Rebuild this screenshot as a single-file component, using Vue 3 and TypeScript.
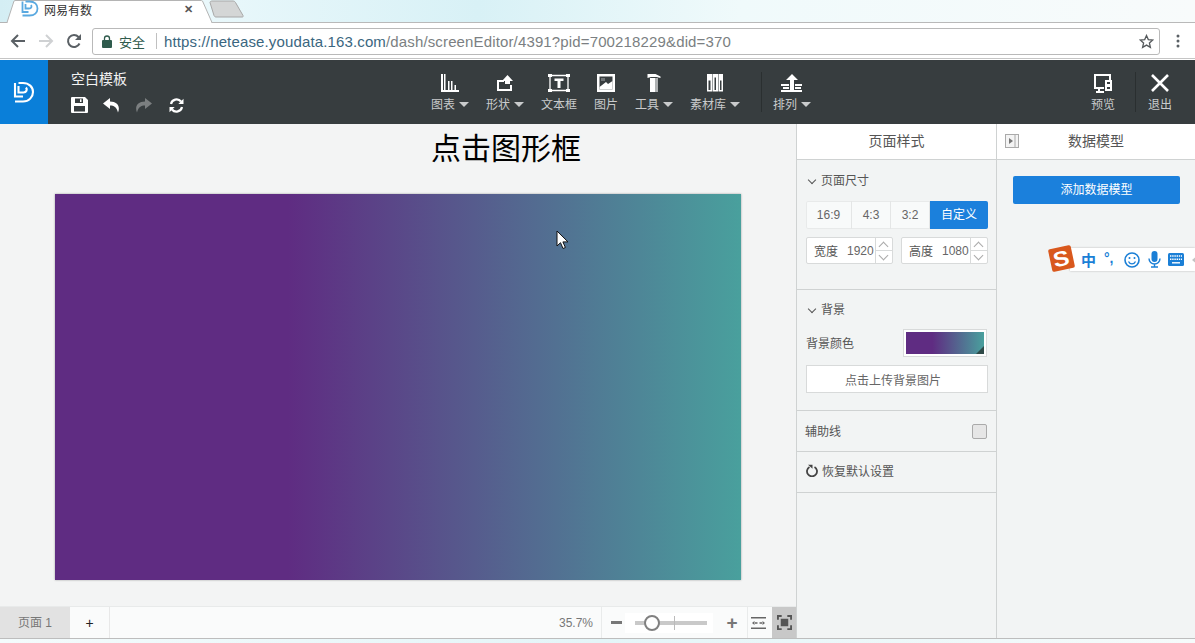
<script setup lang="ts">
interface Tool { label: string; caret: boolean; icon: string }
const tools: Tool[] = [
  { label: '图表', caret: true, icon: 'chart' },
  { label: '形状', caret: true, icon: 'shape' },
  { label: '文本框', caret: false, icon: 'text' },
  { label: '图片', caret: false, icon: 'image' },
  { label: '工具', caret: true, icon: 'tool' },
  { label: '素材库', caret: true, icon: 'lib' },
]
const ratios = ['16:9', '4:3', '3:2']
</script>

<template>
  <div class="page">
    <div class="tabstrip">
      <svg class="tabshape" width="245" height="23" viewBox="0 0 245 23">
        <path d="M0 22.500H7L14 1C14.500 .5 15 .5 16 .5H200C201 .5 202 .5 202.500 1L212 22.500" fill="#fff" stroke="#b4b4b4" />
        <path d="M8 21h203v2H8z" fill="#fff" />
        <path d="M210 2.500C210 1.500 211 1 212 1H233C234 1 235 1.500 235.500 2.500L243 15.500C243.500 16.500 243 17 242 17H216C215 17 214.500 16.500 214 15.500Z" fill="#d4d6d6" stroke="#a8a8a8" />
      </svg>
      <svg class="favicon" width="18" height="18" viewBox="0 0 18 18">
        <path d="M1.500 1.500V12H7.500M4.500 1.500H8.500C13.500 1.500 16.500 4.500 16.500 8.500S13.500 15.500 8.500 15.500H1.500M4.500 4V8.500H8C10.500 8.500 11 6.500 10 5" fill="none" stroke="#5aa9e0" stroke-width="1.800" />
      </svg>
      <span class="tabtitle">网易有数</span>
      <span class="tabclose">✕</span>
    </div>

    <div class="toolbar">
      <svg class="navicon" width="16" height="16" viewBox="0 0 16 16"><path d="M15 8H2M8 2 2 8l6 6" fill="none" stroke="#5a6065" stroke-width="2" /></svg>
      <svg class="navicon" width="16" height="16" viewBox="0 0 16 16"><path d="M1 8h13M8 2l6 6-6 6" fill="none" stroke="#cfd1d3" stroke-width="2" /></svg>
      <svg class="navicon" width="16" height="16" viewBox="0 0 16 16"><path d="M13.500 10.500A6 6 0 1 1 12.500 4L14 5.500" fill="none" stroke="#5a6065" stroke-width="2" /><path d="M15 1v6H9z" fill="#5a6065" /></svg>
      <div class="omnibox">
        <svg width="10" height="13" viewBox="0 0 10 13"><path d="M2.500 6V3.500a2.500 2.500 0 0 1 5 0V6" fill="none" stroke="#2f5b4d" stroke-width="1.300" /><rect y="5" width="10" height="8" rx="1" fill="#2f5b4d" /></svg>
        <span class="secure">安全</span>
        <span class="urlsep"></span>
        <span class="url"><span class="urlhost">https://netease.youdata.163.com</span>/dash/screenEditor/4391?pid=700218229&amp;did=370</span>
        <svg class="star" width="15" height="15" viewBox="0 0 15 15"><path d="M7.500 1.500 9.300 5.600l4.500.4-3.400 3 1 4.400-3.900-2.300-3.900 2.300 1-4.400-3.400-3 4.500-.4z" fill="none" stroke="#55595c" stroke-width="1.300" /></svg>
      </div>
      <svg class="menu" width="4" height="14" viewBox="0 0 4 14"><circle cx="2" cy="2" r="1.500" fill="#5a6065" /><circle cx="2" cy="7" r="1.500" fill="#5a6065" /><circle cx="2" cy="12" r="1.500" fill="#5a6065" /></svg>
    </div>

    <header class="appbar">
      <div class="logo">
        <svg width="22" height="22" viewBox="0 0 22 22">
          <path d="M2 2V15.500H10M5.500 2H10C16 2 20 6 20 11S16 20.500 10 20.500H2M5.500 5V11.500H10.500C13.500 11.500 14.500 8.500 13 6.500" fill="none" stroke="#fff" stroke-width="2.100" />
        </svg>
      </div>
      <div class="doc">
        <div class="docname">空白模板</div>
        <div class="docactions">
          <svg width="17" height="16" viewBox="0 0 17 16"><path fill-rule="evenodd" d="M1 0h13l3 3v12a1 1 0 0 1-1 1H1a1 1 0 0 1-1-1V1a1 1 0 0 1 1-1zM4 1.500V6h8V1.500zm6.500.8v2.800H9V2.300zM3 9v5.500h11V9z" fill="#fff" /></svg>
          <svg width="17" height="15" viewBox="0 0 17 15"><path d="M7 0 0 5.500 7 11V7.500c4 0 6.500 1.500 8 7 2.500-6-.5-11-8-11z" fill="#fff" /></svg>
          <svg width="17" height="15" viewBox="0 0 17 15"><path d="M10 0l7 5.500L10 11V7.500c-4 0-6.500 1.500-8 7-2.500-6 .5-11 8-11z" fill="#7b7f80" /></svg>
          <svg class="sync" width="15" height="15" viewBox="0 0 15 15"><path d="M2 6a5.700 5.700 0 0 1 10-2.500M13 9a5.700 5.700 0 0 1-10 2.500" fill="none" stroke="#fff" stroke-width="2.200" /><path d="M14.500 .8v5.200H9.300zM.5 14.200V9h5.200z" fill="#fff" /></svg>
        </div>
      </div>
      <nav class="tools">
        <button v-for="t in tools" :key="t.label" class="tool">
          <svg class="toolicon" width="24" height="22" viewBox="0 0 24 22">
            <path v-if="t.icon === 'chart'" d="M3 1h2v16H3zM6 1h1.500v16H6zM10 8h1.500v9H10zM13 8h1.500v9H13zM16.500 12H18v5h-1.500zM3 17h18v2H3z" fill="#fff" />
            <g v-else-if="t.icon === 'shape'"><path d="M4 7h7v2H6v7h11v-4h2v6H4z" fill="#fff" /><path d="M9 8l5.500-6L20 8h-3v3h-5V8z" fill="#fff" /></g>
            <g v-else-if="t.icon === 'text'"><path d="M3 2.500h18v15H3z" fill="none" stroke="#fff" stroke-width="1.300" /><path d="M7.500 5.500h9v2.500h-3v7h-3V8h-3z" fill="#fff" /><path d="M1 1h4v3H1zM19 1h4v3h-4zM1 16h4v3H1zM19 16h4v3h-4z" fill="#fff" /></g>
            <g v-else-if="t.icon === 'image'"><path fill-rule="evenodd" d="M3 1h18v18H3zM5.500 3.500v13h13v-13z" fill="#fff" /><path d="M5.500 14 12 9l2 2 4.500-3v8.500h-13z" fill="#fff" /><path d="M7 5h4v3H7z" fill="#6f7476" /></g>
            <g v-else-if="t.icon === 'tool'"><path d="M5.500 1h8l5 2.500v1.500l-4-1H9l-3.500 1zM8 5h5v14H8z" fill="#fff" /><path d="M13 5h3v14h-3z" fill="#aeb1b2" /></g>
            <g v-else-if="t.icon === 'lib'"><path fill-rule="evenodd" d="M4 1h5v17.500H4zM5.500 7.500v9.500h2V7.500zM9.500 1h5.500v17.500H9.500zM11.500 4.500V17h1.500V4.500zM15.500 1H20v17.500h-4.500zM17 7.500V17h1.500V7.500z" fill="#fff" /></g>
          </svg>
          <span class="toollabel">{{ t.label }}<i v-if="t.caret" class="caret"></i></span>
        </button>
        <span class="barsep"></span>
        <button class="tool">
          <svg class="toolicon" width="24" height="22" viewBox="0 0 24 22"><path d="M12 1l6 6h-4v11h-4V7H6zM1 11h8v2H1zM15 11h7v2h-7zM3 14h6v2H3zM15 14h6v2h-6zM1 17h21v2H1z" fill="#fff" /></svg>
          <span class="toollabel">排列<i class="caret"></i></span>
        </button>
      </nav>
      <div class="exitgroup">
        <button class="tool">
          <svg class="toolicon" width="24" height="22" viewBox="0 0 24 22"><path fill-rule="evenodd" d="M3 1h17v6h-2V3H5v11h8v2H9v2h4v2H5v-2h2v-2H3zM14 7h7v11h-7zM16 9v7h3V9z M16 11h3v3h-3z" fill="#fff" /></svg>
          <span class="toollabel">预览</span>
        </button>
        <span class="barsep"></span>
        <button class="tool">
          <svg class="toolicon" width="24" height="22" viewBox="0 0 24 22"><path d="M4 2l16 16M20 2 4 18" stroke="#fff" stroke-width="2.600" fill="none" /></svg>
          <span class="toollabel">退出</span>
        </button>
      </div>
    </header>

    <main class="workspace">
      <section class="stage">
        <div class="canvasarea">
          <h1 class="caption">点击图形框</h1>
          <div class="canvas"></div>
        </div>
        <footer class="statusbar">
          <div class="pagetab">页面 1</div>
          <div class="addpage">+</div>
          <div class="zoomgroup">
            <span class="percent">35.7%</span>
            <span class="zoomsep"></span>
            <i class="minus"></i>
            <div class="slider"><div class="track"><i class="tick"></i><i class="thumb"></i></div></div>
            <span class="plus">+</span>
            <span class="zoomsep second"></span>
            <svg class="fit" width="15" height="14" viewBox="0 0 15 14"><path d="M0 1h15v1.500H0zM0 11.500h15V13H0z" fill="#666" /><path d="M1 7l2.500-2v4zM6.500 6.300H3v1.400h3.500zM14 7l-2.500-2v4zM8.500 6.300H12v1.400H8.500z" fill="#666" /></svg>
            <div class="fullbtn">
              <svg width="15" height="15" viewBox="0 0 16 16"><path d="M1 5V1h4M11 1h4v4M15 11v4h-4M5 15H1v-4" fill="none" stroke="#555" stroke-width="2" /><rect x="4" y="4" width="8" height="8" fill="#555" /></svg>
            </div>
          </div>
        </footer>
      </section>

      <aside class="panel pageprops">
        <div class="panelhead">页面样式</div>
        <div class="group sizegroup">
          <div class="grouptitle"><i class="chev"></i>页面尺寸</div>
          <div class="ratios">
            <span v-for="r in ratios" :key="r" class="ratio">{{ r }}</span>
            <span class="ratio active">自定义</span>
          </div>
          <div class="dims">
            <div class="dim"><span class="dimlabel">宽度</span><span class="dimval">1920</span><span class="spin"><i class="up"></i><i class="down"></i></span></div>
            <div class="dim"><span class="dimlabel">高度</span><span class="dimval">1080</span><span class="spin"><i class="up"></i><i class="down"></i></span></div>
          </div>
        </div>
        <div class="group bggroup">
          <div class="grouptitle"><i class="chev"></i>背景</div>
          <div class="bgrow">
            <span class="bglabel">背景颜色</span>
            <span class="swatchbox"><span class="swatch"><i class="swatchmark"></i></span></span>
          </div>
          <button class="upload">点击上传背景图片</button>
        </div>
        <div class="group linerow">
          <span>辅助线</span><i class="check"></i>
        </div>
        <div class="group resetrow">
          <svg width="12" height="13" viewBox="0 0 12 13"><path d="M3.500 3a5 5 0 1 0 5 0" fill="none" stroke="#444" stroke-width="1.800" /><path d="M2 .8h4.500v4z" fill="#444" /></svg>
          <span>恢复默认设置</span>
        </div>
      </aside>

      <aside class="panel modelpanel">
        <div class="panelhead">
          <svg class="collapse" width="14" height="14" viewBox="0 0 14 14"><rect x=".5" y=".5" width="13" height="13" fill="#f4f4f4" stroke="#aaa" /><path d="M9.500 0h1v14h-1z" fill="#aaa" /><path d="M4 4l4 3-4 3z" fill="#777" /></svg>
          数据模型
        </div>
        <button class="addmodel">添加数据模型</button>
      </aside>
    </main>
    <div class="bottomstrip"></div>

    <div class="ime">
      <span class="imelogo"><b>S</b></span>
      <div class="imebar">
        <b class="imezh">中</b>
        <b class="imedot">°,</b>
        <svg width="16" height="16" viewBox="0 0 16 16"><circle cx="8" cy="8" r="7" fill="none" stroke="#1b7fd6" stroke-width="1.600" /><circle cx="5.500" cy="6" r="1" fill="#1b7fd6" /><circle cx="10.500" cy="6" r="1" fill="#1b7fd6" /><path d="M4.500 9.500a3.800 3.800 0 0 0 7 0" fill="none" stroke="#1b7fd6" stroke-width="1.300" /></svg>
        <svg width="13" height="17" viewBox="0 0 13 17"><rect x="3.500" width="6" height="11" rx="3" fill="#1b7fd6" /><path d="M1 7.500a5.500 5.500 0 0 0 11 0M6.500 13v3M3 16h7" fill="none" stroke="#1b7fd6" stroke-width="1.400" /></svg>
        <svg class="keyboard" width="16" height="13" viewBox="0 0 16 13"><rect width="16" height="13" rx="1.500" fill="#1b7fd6" /><path d="M2 3h12M2 6.200h12" stroke="#fff" stroke-width="1.400" stroke-dasharray="1.400 .8" /><path d="M4 9.800h8" stroke="#fff" stroke-width="1.400" /></svg>
        <svg width="6" height="13" viewBox="0 0 6 13"><path d="M0 7l6-5v10z" fill="#c4c4c4" /></svg>
      </div>
    </div>

    <svg class="pointer" width="13" height="20" viewBox="0 0 13 20"><path d="M1 1v15l3.500-3.300 2.500 5.800 2.400-1-2.500-5.600H12z" fill="#fff" stroke="#111" stroke-width="1" /></svg>
  </div>
</template>

<style>
html, body { margin: 0; padding: 0; background: #fff; }
</style>

<style scoped>
.page {
  position: relative;
  width: 1195px;
  height: 643px;
  overflow: hidden;
  display: flex;
  flex-direction: column;
  font-family: "Liberation Sans", "Noto Sans CJK SC", sans-serif;
  background: #fff;
}
button { font-family: inherit; border: 0; background: none; padding: 0; margin: 0; }
i { display: block; font-style: normal; }

.tabstrip {
  position: relative;
  flex: none;
  height: 23px;
  box-sizing: border-box;
  display: flex;
  align-items: center;
  background: linear-gradient(90deg, #d4eef4 0, #eaf8fb 16%, #d8f1f6 40%, #f0fafb 62%, #f8fbfb 100%);
  border-bottom: 1px solid #b9b9b9;
}
.tabshape { position: absolute; left: 0; top: 0; }
.tabshape + .favicon { margin-left: 21px; }
.favicon { position: relative; margin-top: -4px; }
.tabtitle { position: relative; margin-left: 5px; margin-top: -4px; font-size: 12px; color: #333; }
.tabclose { position: relative; margin-left: 92px; margin-top: -4px; font-size: 11px; color: #555; font-weight: 700; }

.toolbar {
  flex: none;
  height: 36px;
  box-sizing: border-box;
  background: #fff;
  border-bottom: 1px solid #c5c5c5;
  display: flex;
  align-items: center;
  padding-left: 10px;
  padding-top: 1px;
}
.navicon { margin-right: 12px; flex: none; }
.omnibox {
  margin-left: -2px;
  width: 1068px;
  height: 27px;
  flex: none;
  box-sizing: border-box;
  border: 1px solid #b9b9b9;
  border-radius: 3px;
  display: flex;
  align-items: center;
  padding-left: 9px;
  background: #fff;
}
.secure { font-size: 13px; color: #2f5b4d; margin-left: 7px; }
.urlsep { width: 1px; height: 16px; background: #c0c0c0; margin: 0 7px 0 11px; }
.url { font-size: 15px; color: #7b7f82; letter-spacing: .14px; white-space: nowrap; }
.urlhost { color: #3a6680; }
.star { margin-left: auto; margin-right: 5px; }
.menu { margin-left: 16px; }

.appbar {
  flex: none;
  height: 64px;
  margin-top: 1px;
  background: #373d3f;
  display: flex;
  color: #fff;
}
.logo {
  width: 48px;
  flex: none;
  background: #0a7fd9;
  display: flex;
  align-items: center;
  justify-content: center;
}
.doc { width: 383px; flex: none; box-sizing: border-box; padding: 10px 0 0 23px; }
.docname { font-size: 14px; line-height: 18px; color: #f2f2f2; }
.docactions { display: flex; align-items: center; gap: 15px; margin-top: 9px; }
.sync { margin-left: 2px; }
.tools { display: flex; gap: 17px; align-items: flex-start; }
.tool {
  display: flex;
  flex-direction: column;
  align-items: center;
  padding-top: 13px;
  color: #c9cbcc;
  flex: none;
}
.toolicon { display: block; }
.toollabel { display: flex; align-items: center; font-size: 12px; line-height: 17px; margin-top: 2px; white-space: nowrap; }
.caret {
  width: 0;
  height: 0;
  margin-left: 4px;
  margin-top: -3px;
  border-left: 5px solid transparent;
  border-right: 5px solid transparent;
  border-top: 5px solid #c9cbcc;
}
.barsep { width: 1px; height: 40px; margin: 12px -6px 0 4px; background: #2a2f30; flex: none; }
.exitgroup { margin-left: auto; display: flex; padding-right: 23px; }
.exitgroup .barsep { margin: 12px 12px 0 20px; }

.workspace { flex: none; height: 514px; display: flex; background: #f2f4f4; }
.stage { flex: none; width: 796px; display: flex; flex-direction: column; border-right: 1px solid #cfd2d2; box-sizing: content-box; }
.canvasarea { flex: 1; padding: 70px 0 0 55px; position: relative; background: #f3f4f4; }
.caption {
  position: absolute;
  left: 216px;
  right: 0;
  top: 4px;
  margin: 0;
  text-align: center;
  font-size: 30px;
  line-height: 41px;
  font-weight: 400;
  color: #000;
}
.canvas {
  width: 686px;
  height: 386px;
  background: linear-gradient(90deg, #5f2c82 0, #5f2c82 34%, #49a09d 100%);
  box-shadow: 0 0 2px rgba(0, 0, 0, .35);
}
.statusbar {
  flex: none;
  height: 32px;
  box-sizing: border-box;
  border-top: 1px solid #e8eaea;
  background: #fafbfb;
  display: flex;
  align-items: stretch;
  font-size: 12px;
  color: #777;
}
.pagetab { width: 70px; background: #e2e2e2; text-align: center; line-height: 32px; flex: none; }
.addpage { width: 39px; border-right: 1px solid #e8e8e8; text-align: center; line-height: 33px; color: #222; font-size: 14px; }
.zoomgroup { margin-left: auto; display: flex; align-items: center; height: 100%; }
.percent { color: #777; margin-right: 8px; }
.zoomsep { width: 1px; height: 100%; background: #e9ebeb; }
.minus { width: 11px; height: 3px; background: #777; margin: 0 3px 0 9px; }
.slider {
  box-sizing: border-box;
  width: 88px;
  height: 20px;
  padding: 0 6px 0 10px;
  background: #fff;
  display: flex;
  align-items: center;
  margin-right: 13px;
}
.track { position: relative; width: 72px; height: 4px; background: #c9c9c9; }
.thumb {
  position: absolute;
  left: 9px;
  top: -6px;
  width: 12px;
  height: 12px;
  border: 2px solid #808080;
  border-radius: 50%;
  background: #fff;
}
.tick { position: absolute; left: 39px; top: -5px; width: 1px; height: 14px; background: #bbb; }
.plus { font-size: 19px; font-weight: 700; color: #777; line-height: 20px; margin-right: 9px; width: 12px; text-align: center; }
.second { margin-right: 3px; }
.fit { margin-right: 6px; flex: none; }
.fullbtn { width: 24px; height: 100%; background: #c8c8c8; display: flex; align-items: center; justify-content: center; }

.panel { flex: none; background: #f2f4f4; color: #555; font-size: 12px; box-sizing: border-box; }
.pageprops { width: 200px; border-right: 1px solid #cfd2d2; }
.modelpanel { width: 198px; }
.panelhead {
  position: relative;
  height: 36px;
  box-sizing: border-box;
  border-bottom: 1px solid #cfd2d2;
  background: #fff;
  text-align: center;
  font-size: 14px;
  line-height: 35px;
  color: #555;
}
.collapse { position: absolute; left: 8px; top: 10px; }
.group { box-sizing: border-box; border-bottom: 1px solid #cfd2d2; padding: 0 9px; }
.sizegroup { height: 130px; padding-top: 12px; }
.grouptitle { display: flex; align-items: center; font-size: 12px; line-height: 18px; }
.chev {
  width: 5px;
  height: 5px;
  margin: -3px 6px 0 3px;
  border-right: 1.500px solid #555;
  border-bottom: 1.500px solid #555;
  transform: rotate(45deg);
}
.ratios { display: flex; height: 28px; margin-top: 11px; width: 182px; border-radius: 2px; overflow: hidden; background: #f8fafa; box-shadow: inset 0 0 0 1px #e8eaea; }
.ratio { width: 39px; border-right: 1px solid #e4e6e6; text-align: center; line-height: 28px; color: #666; box-sizing: border-box; }
.ratio:first-child { width: 46px; }
.ratio.active { width: 58px; border: 0; background: #1b80dc; color: #fff; font-size: 12px; }
.dims { display: flex; gap: 8px; margin-top: 8px; }
.dim {
  width: 87px;
  height: 27px;
  box-sizing: border-box;
  border: 1px solid #d8dada;
  background: #fff;
  display: flex;
  align-items: center;
  padding-left: 7px;
  border-radius: 2px;
  white-space: nowrap;
}
.dimval { margin-left: 9px; width: 28px; color: #666; }
.spin { margin-left: auto; width: 16px; height: 100%; border-left: 1px solid #d8dada; display: flex; flex-direction: column; }
.spin i { flex: 1; position: relative; }
.spin .up { border-bottom: 1px solid #d8dada; }
.spin i::after {
  content: "";
  position: absolute;
  left: 4px;
  width: 6px;
  height: 6px;
  border-left: 1px solid #aaa;
  border-top: 1px solid #aaa;
}
.spin .up::after { top: 5px; transform: rotate(45deg); }
.spin .down::after { top: 1px; transform: rotate(225deg); }
.bggroup { height: 121px; padding-top: 11px; }
.bgrow { display: flex; align-items: center; justify-content: space-between; margin-top: 10px; }
.bglabel { margin-top: -2px; }
.swatchbox { width: 84px; height: 28px; box-sizing: border-box; background: #fff; border: 1px solid #d8dada; padding: 2px 2px; }
.swatch { position: relative; display: block; height: 100%; background: linear-gradient(90deg, #5f2c82 0, #5f2c82 34%, #49a09d 100%); }
.swatchmark { position: absolute; right: 0; bottom: 0; width: 0; height: 0; border-left: 8px solid transparent; border-bottom: 8px solid #2f4a48; }
.upload {
  display: block;
  width: 182px;
  height: 28px;
  margin-top: 8px;
  padding-right: 8px;
  background: #fff;
  border: 1px solid #d8dada;
  font-size: 12px;
  color: #666;
  box-sizing: border-box;
}
.linerow { height: 41px; display: flex; align-items: center; justify-content: space-between; padding-left: 8px; padding-right: 9px; padding-bottom: 2px; }
.check { width: 13px; height: 13px; background: #e6e6e6; border: 1px solid #aaa; border-radius: 2px; margin-top: 2px; }
.resetrow { height: 41px; display: flex; align-items: center; gap: 4px; padding-bottom: 3px; }
.addmodel {
  display: block;
  margin: 16px 0 0 16px;
  width: 167px;
  height: 28px;
  padding-bottom: 3px;
  background: #1b80dc;
  color: #fff;
  font-size: 12px;
  border-radius: 2px;
}
.bottomstrip { flex: 1; border-top: 1px solid #bdbdbd; background: linear-gradient(90deg, #f4fbfc, #e4f5f8 50%, #f6fbfb); }

.ime { position: absolute; left: 1048px; top: 245px; width: 147px; height: 28px; }
.imelogo {
  position: absolute;
  left: 2px;
  top: 2px;
  z-index: 1;
  width: 23px;
  height: 23px;
  background: #d9581d;
  border-radius: 2px;
  transform: rotate(-12deg);
  display: flex;
  align-items: center;
  justify-content: center;
  color: #fff;
  font-size: 21px;
  line-height: 23px;
}
.imelogo b { display: block; transform: scaleX(1.150); }
.imebar {
  position: absolute;
  left: 22px;
  top: 3px;
  right: 0;
  height: 23px;
  overflow: hidden;
  background: #fff;
  box-shadow: 0 0 2px rgba(0,0,0,.25);
  display: flex;
  align-items: center;
  padding-left: 11px;
  gap: 8px;
  color: #1b7fd6;
}
.imebar > * { flex: none; }
.imezh { font-size: 15px; }
.imedot { font-size: 14px; width: 12px; margin-top: -4px; white-space: nowrap; }
.keyboard { margin-left: -1px; }
.pointer { position: absolute; left: 556px; top: 230px; }
</style>
